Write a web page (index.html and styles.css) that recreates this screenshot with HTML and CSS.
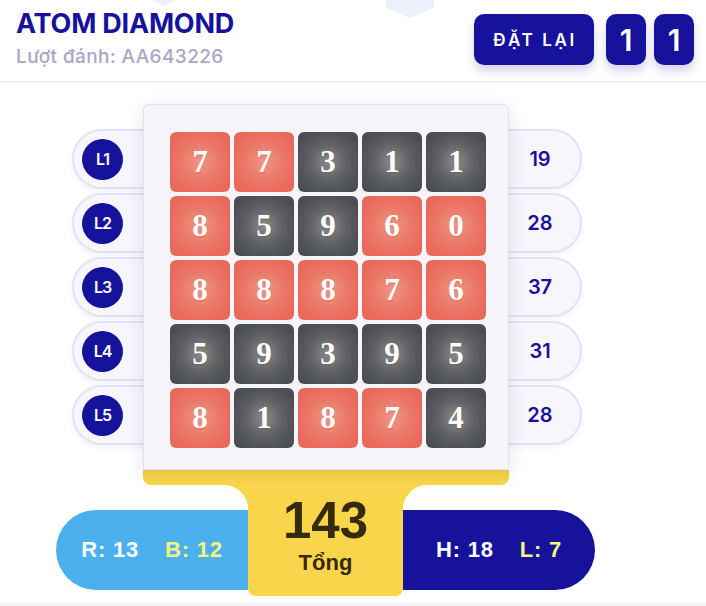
FILE: index.html
```html
<!DOCTYPE html>
<html lang="vi">
<head>
    <meta charset="UTF-8">
    <meta name="viewport" content="width=device-width, initial-scale=1.0">
    <title>Atom Diamond</title>
    <link rel="stylesheet" href="styles.css">
</head>
<body>
    <div class="page">
        <header class="topbar">
            <span class="hex hex-left"></span>
            <span class="hex hex-right"></span>
            <div class="title-block">
                <h1 class="title">ATOM DIAMOND</h1>
                <div class="round-id">Lượt đánh: AA643226</div>
            </div>
            <div class="actions">
                <button class="reset-button">ĐẶT LẠI</button>
                <div class="counter first">1</div>
                <div class="counter">1</div>
            </div>
        </header>

        <main class="stage">
            <div class="lines">
                <div class="line"><span class="line-tag">L1</span><span class="line-sum">19</span></div>
                <div class="line"><span class="line-tag">L2</span><span class="line-sum">28</span></div>
                <div class="line"><span class="line-tag">L3</span><span class="line-sum">37</span></div>
                <div class="line"><span class="line-tag">L4</span><span class="line-sum">31</span></div>
                <div class="line"><span class="line-tag">L5</span><span class="line-sum">28</span></div>
            </div>

            <div class="tray">
                <div class="card">
                    <div class="grid">
                        <div class="tile red">7</div>
                        <div class="tile red">7</div>
                        <div class="tile dark">3</div>
                        <div class="tile dark">1</div>
                        <div class="tile dark">1</div>

                        <div class="tile red">8</div>
                        <div class="tile dark">5</div>
                        <div class="tile dark">9</div>
                        <div class="tile red">6</div>
                        <div class="tile red">0</div>

                        <div class="tile red">8</div>
                        <div class="tile red">8</div>
                        <div class="tile red">8</div>
                        <div class="tile red">7</div>
                        <div class="tile red">6</div>

                        <div class="tile dark">5</div>
                        <div class="tile dark">9</div>
                        <div class="tile dark">3</div>
                        <div class="tile dark">9</div>
                        <div class="tile dark">5</div>

                        <div class="tile red">8</div>
                        <div class="tile dark">1</div>
                        <div class="tile red">8</div>
                        <div class="tile red">7</div>
                        <div class="tile dark">4</div>
                    </div>
                </div>
                <div class="strip"></div>
            </div>

            <div class="score">
                <div class="score-side left">
                    <span>R: 13</span>
                    <span class="hl">B: 12</span>
                </div>
                <div class="total">
                    <div class="total-value">143</div>
                    <div class="total-label">Tổng</div>
                </div>
                <div class="score-side right">
                    <span>H: 18</span>
                    <span class="hl">L: 7</span>
                </div>
            </div>
        </main>
    </div>
</body>
</html>
```

FILE: styles.css
```css
body {
    margin: 0;
    background: #ffffff;
    font-family: Inter, "Noto Sans", sans-serif;
}

.page {
    width: 706px;
    height: 606px;
    box-sizing: border-box;
    border-bottom: 3px solid #f3f2fa;
    overflow: hidden;
}

/* header */

.topbar {
    position: relative;
    height: 81px;
    border-bottom: 2px solid #efeef7;
    display: flex;
    justify-content: space-between;
    padding: 0 12px 0 16px;
}

.hex {
    position: absolute;
    top: -22px;
    background: #eef1fb;
    clip-path: polygon(50% 0, 100% 25%, 100% 75%, 50% 100%, 0 75%, 0 25%);
}

.hex-left {
    left: 150px;
    width: 28px;
    height: 28px;
}

.hex-right {
    left: 386px;
    width: 48px;
    height: 40px;
}

.title-block {
    position: relative;
    padding-top: 6px;
}

.title {
    margin: 0;
    font-size: 27px;
    line-height: 35px;
    font-weight: 700;
    color: #17129b;
    letter-spacing: -0.2px;
}

.round-id {
    margin-top: 4px;
    font-size: 19px;
    line-height: 24px;
    font-weight: 500;
    color: #a9a6c6;
    letter-spacing: 0.4px;
}

.actions {
    position: relative;
    display: flex;
    align-items: flex-start;
    padding-top: 14px;
}

.reset-button,
.counter {
    height: 51px;
    border: none;
    border-radius: 10px;
    background: #17129b;
    color: #ffffff;
    box-shadow: 0 6px 10px rgba(23, 18, 155, 0.18);
}

.reset-button {
    width: 120px;
    font-family: Inter, sans-serif;
    font-size: 17px;
    font-weight: 600;
    letter-spacing: 2.6px;
    padding: 0 0 0 2px;
}

.counter {
    width: 40px;
    margin-left: 8px;
    display: flex;
    align-items: center;
    justify-content: center;
    font-size: 30px;
    font-weight: 600;
}

.counter.first {
    margin-left: 12px;
}

/* board */

.stage {
    position: relative;
    width: 539px;
    margin-left: 56px;
    padding-top: 46px;
}

.lines {
    display: flex;
    flex-direction: column;
    gap: 4px;
    margin-left: 16px;
    width: 510px;
}

.line {
    height: 60px;
    box-sizing: border-box;
    border: 2px solid #e4e2f2;
    border-radius: 30px;
    background: #f7f6fd;
    box-shadow: 0 2px 6px rgba(40, 30, 110, 0.06);
    display: flex;
    align-items: center;
    justify-content: space-between;
    padding: 0 10px 0 8px;
}

.line-tag {
    width: 41px;
    height: 41px;
    border-radius: 50%;
    background: #17129b;
    color: #ffffff;
    display: flex;
    align-items: center;
    justify-content: center;
    font-size: 16px;
    font-weight: 600;
    letter-spacing: -1px;
}

.line-sum {
    width: 60px;
    text-align: center;
    font-size: 20px;
    font-weight: 600;
    color: #17129b;
}

.tray {
    position: absolute;
    top: 21px;
    left: 87px;
    width: 366px;
}

.card {
    height: 366px;
    box-sizing: border-box;
    border: 1px solid #e2e0f0;
    border-radius: 6px 6px 0 0;
    background: #f6f5fc;
    box-shadow: 0 4px 18px rgba(50, 40, 120, 0.13);
    padding: 27px 0 0 26px;
}

.grid {
    display: grid;
    grid-template-columns: repeat(5, 60px);
    grid-auto-rows: 60px;
    gap: 4px;
}

.tile {
    border-radius: 6px;
    display: flex;
    align-items: center;
    justify-content: center;
    font-family: "Liberation Serif", serif;
    font-weight: 700;
    font-size: 31px;
    color: #ffffff;
    text-shadow: 0 1px 2px rgba(0, 0, 0, 0.15);
}

.tile.red {
    background: radial-gradient(circle, #f29585 0%, #ec7868 45%, #e8695a 80%);
}

.tile.dark {
    background: radial-gradient(circle, #8d8c83 0%, #5e6064 45%, #4b4e53 80%);
}

.strip {
    height: 15px;
    border-radius: 0 0 8px 8px;
    background: linear-gradient(#e8c545, #f8d54b);
}

/* score */

.score {
    display: flex;
    align-items: flex-start;
    margin-top: 40px;
}

.score-side {
    width: 192px;
    height: 80px;
    margin-top: 25px;
    display: flex;
    align-items: center;
    justify-content: center;
    gap: 26px;
    font-family: "Liberation Sans", Arial, sans-serif;
    font-size: 22px;
    font-weight: 700;
    letter-spacing: 0.8px;
    color: #ffffff;
}

.score-side.left {
    background: #4cb0ee;
    border-radius: 40px 0 0 40px;
}

.score-side.right {
    background: #17129b;
    border-radius: 0 40px 40px 0;
}

.score-side .hl {
    color: #f7f37d;
}

.total {
    position: relative;
    width: 155px;
    height: 111px;
    background: #f8d54b;
    border-radius: 0 0 8px 8px;
    text-align: center;
    font-family: "Liberation Sans", Arial, sans-serif;
    font-weight: 700;
    color: #352b0b;
}

.total::before,
.total::after {
    content: "";
    position: absolute;
    top: 0;
    width: 25px;
    height: 25px;
}

.total::before {
    left: -25px;
    background: radial-gradient(circle at 0 100%, transparent 25px, #f8d54b 25.5px);
}

.total::after {
    right: -25px;
    background: radial-gradient(circle at 100% 100%, transparent 25px, #f8d54b 25.5px);
}

.total-value {
    padding-top: 10px;
    font-size: 51px;
    line-height: 52px;
}

.total-label {
    margin-top: 3px;
    font-size: 22px;
    line-height: 26px;
}
```
